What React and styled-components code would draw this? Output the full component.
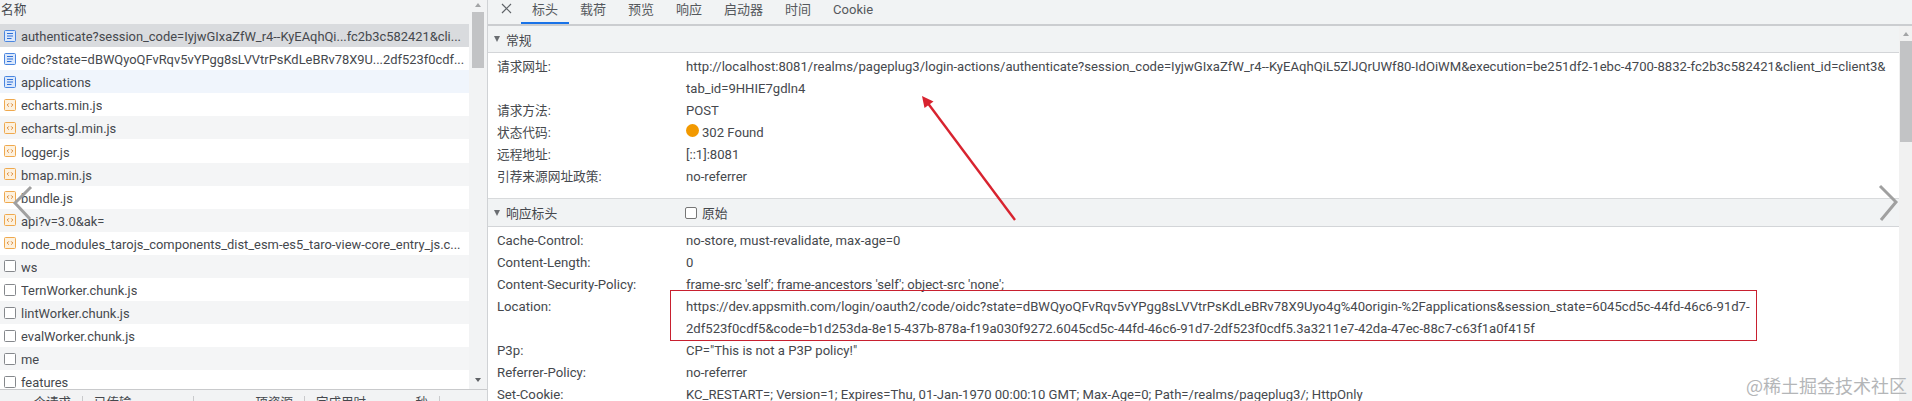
import React from "react";
import styled, { createGlobalStyle } from "styled-components";

const GlobalStyle = createGlobalStyle`
  html, body { margin: 0; padding: 0; background: #fff; }
  body { width: 1912px; height: 401px; overflow: hidden; font-family: "Roboto", "Noto Sans CJK SC", sans-serif; }
`;

const Page = styled.div`
  position: relative;
  display: flex;
  width: 1912px;
  height: 401px;
  overflow: hidden;
  color: #45484d;
`;

const ListPane = styled.div`
  flex: 0 0 487px;
  height: 401px;
  display: flex;
  flex-direction: column;
  border-right: 1px solid #d0d2d5;
  background: #f2f3f4;
`;

const ListHeader = styled.div`
  height: 24px;
  flex: none;
  padding-left: 1px;
  line-height: 19px;
  font-size: 12.7px;
  box-sizing: border-box;
`;

const ListBody = styled.div`
  display: flex;
  flex: none;
  height: 365px;
`;

const Rows = styled.div`
  width: 469px;
  flex: none;
  overflow: hidden;
  background: #fff;
`;

const Row = styled.div`
  height: 23.1px;
  display: flex;
  align-items: center;
  gap: 5px;
  padding-left: 4px;
  font-size: 12.9px;
  white-space: nowrap;
  overflow: hidden;
  background: ${(p) => (p.$selected ? "#d9dbde" : p.$hover ? "#f0f5fc" : p.$odd ? "#f4f5f6" : "#fff")};
`;

const RowName = styled.span`
  overflow: hidden;
  text-overflow: ellipsis;
  padding-top: 2px;
`;

const ListScrollbar = styled.div`
  position: relative;
  flex: 1;
`;

const DetailScrollbar = styled.div`
  position: relative;
  flex: 0 0 13px;
  background: #f1f1f1;
`;

const ScrollThumb = styled.div`
  position: absolute;
  right: ${(p) => p.$right}px;
  top: ${(p) => p.$top}px;
  width: ${(p) => p.$width}px;
  height: ${(p) => p.$height}px;
  background: #c2c3c5;
`;

const ScrollArrow = styled.div`
  position: absolute;
  right: ${(p) => p.$right}px;
  top: ${(p) => p.$top}px;
  width: 0;
  height: 0;
  border-left: 3.5px solid transparent;
  border-right: 3.5px solid transparent;
  ${(p) => (p.$up ? "border-bottom: 4px solid #a3a4a6;" : "border-top: 4px solid #5f6165;")}
`;

const StatusBar = styled.div`
  flex: 1;
  display: flex;
  align-items: flex-start;
  padding-top: 6px;
  border-top: 1px solid #c9cacc;
  overflow: hidden;
`;

const StatusItem = styled.div`
  display: flex;
  justify-content: ${(p) => p.$justify || "flex-start"};
  width: ${(p) => p.$width}px;
  height: 20px;
  padding: 0 11px;
  flex: none;
  box-sizing: border-box;
  border-right: 1px solid #c9cacc;
  font-size: 12.5px;
  line-height: 14px;
  white-space: nowrap;
`;

const DetailPane = styled.div`
  flex: 1;
  min-width: 0;
  display: flex;
  flex-direction: column;
  background: #fff;
`;

const TabBar = styled.div`
  height: 26px;
  flex: none;
  box-sizing: border-box;
  display: flex;
  align-items: flex-start;
  background: #f1f3f4;
  border-bottom: 2px solid #cbcdd0;
`;

const CloseButton = styled.div`
  width: 33px;
  height: 16px;
  padding-left: 4px;
  box-sizing: border-box;
  display: flex;
  align-items: center;
  justify-content: center;
  svg { display: block; }
`;

const Tab = styled.div`
  height: 24px;
  box-sizing: border-box;
  padding: 0 11px;
  line-height: 19px;
  font-size: 13px;
  color: #55585c;
  border-bottom: 2px solid ${(p) => (p.$active ? "#1a73e8" : "transparent")};
`;

const DetailBody = styled.div`
  flex: 1;
  min-height: 0;
  display: flex;
  overflow: hidden;
`;

const DetailContent = styled.div`
  position: relative;
  flex: 1;
  min-width: 0;
`;

const Section = styled.section`
  border-bottom: ${(p) => (p.$last ? "none" : "1px solid #d8dadc")};
`;

const SectionHeader = styled.div`
  height: ${(p) => p.$height}px;
  box-sizing: border-box;
  display: flex;
  align-items: center;
  background: #f1f3f4;
  border-bottom: 1px solid #d3d5d8;
  padding-left: 6px;
  font-size: 12.8px;
`;

const Caret = styled.span`
  width: 0;
  height: 0;
  border-left: 3.5px solid transparent;
  border-right: 3.5px solid transparent;
  border-top: 6px solid #6a6d71;
  margin-right: 6px;
`;

const SectionTitle = styled.span`
  width: 179px;
  flex: none;
`;

const RawToggle = styled.label`
  display: flex;
  align-items: center;
  gap: 5px;
`;

const CheckBox = styled.span`
  display: block;
  width: 12px;
  height: 12px;
  box-sizing: border-box;
  border: 1px solid #767676;
  border-radius: 2px;
  background: #fff;
`;

const KeyValues = styled.div`
  padding: 3px 0 ${(p) => p.$bottom || 0}px 9px;
`;

const KeyValue = styled.div`
  display: flex;
  line-height: 22px;
  font-size: 13.1px;
  white-space: nowrap;
`;

const Key = styled.div`
  width: 189px;
  flex: none;
  font-size: ${(p) => (p.$cjk ? "12.7px" : "13.2px")};
`;

const StatusDot = styled.span`
  display: inline-block;
  width: 13px;
  height: 13px;
  border-radius: 50%;
  background: #f29900;
  margin-right: 3px;
  vertical-align: 0;
`;

const Highlight = styled.div`
  position: absolute;
  left: 182px;
  top: 264px;
  width: 1087px;
  height: 51px;
  border: 1px solid #c8202f;
  box-sizing: border-box;
  pointer-events: none;
`;

const Overlay = styled.svg`
  position: absolute;
  left: 0;
  top: 0;
  width: 1912px;
  height: 401px;
  pointer-events: none;
`;

const Watermark = styled.div`
  position: absolute;
  right: 5px;
  bottom: 5px;
  font-size: 18px;
  line-height: 22px;
  color: #b4b6b8;
  font-family: "Noto Sans CJK SC", sans-serif;
`;

const DocIcon = () => (
  <svg width="12" height="12" viewBox="0 0 12 12" style={{ flex: "none" }}>
    <rect x="0.5" y="0.5" width="11" height="11" rx="1" fill="#dbe8fb" stroke="#4a86e0" />
    <path d="M3 3.5h6M3 6h6M3 8.5h4.5" stroke="#2f6fd6" strokeWidth="1.1" />
  </svg>
);

const ScriptIcon = () => (
  <svg width="12" height="12" viewBox="0 0 12 12" style={{ flex: "none" }}>
    <rect x="0.5" y="0.5" width="11" height="11" rx="1" fill="#fdf1de" stroke="#efa94e" />
    <path d="M4.8 4.4L3.2 6l1.6 1.6M7.2 4.4L8.8 6 7.2 7.6" fill="none" stroke="#d9822b" strokeWidth="1" />
  </svg>
);

const BlankIcon = () => (
  <svg width="12" height="12" viewBox="0 0 12 12" style={{ flex: "none" }}>
    <rect x="0.5" y="0.5" width="11" height="11" rx="1" fill="#fff" stroke="#85888c" />
  </svg>
);

const requests = [
  ["doc", "authenticate?session_code=IyjwGIxaZfW_r4--KyEAqhQi...fc2b3c582421&cli..."],
  ["doc", "oidc?state=dBWQyoQFvRqv5vYPgg8sLVVtrPsKdLeBRv78X9U...2df523f0cdf..."],
  ["doc", "applications"],
  ["js", "echarts.min.js"],
  ["js", "echarts-gl.min.js"],
  ["js", "logger.js"],
  ["js", "bmap.min.js"],
  ["js", "bundle.js"],
  ["js", "api?v=3.0&ak="],
  ["js", "node_modules_tarojs_components_dist_esm-es5_taro-view-core_entry_js.c..."],
  ["blank", "ws"],
  ["blank", "TernWorker.chunk.js"],
  ["blank", "lintWorker.chunk.js"],
  ["blank", "evalWorker.chunk.js"],
  ["blank", "me"],
  ["blank", "features"],
];

const icons = { doc: DocIcon, js: ScriptIcon, blank: BlankIcon };

const tabs = ["标头", "载荷", "预览", "响应", "启动器", "时间", "Cookie"];

const general = [
  ["请求网址:", [
    "http://localhost:8081/realms/pageplug3/login-actions/authenticate?session_code=IyjwGIxaZfW_r4--KyEAqhQiL5ZlJQrUWf80-IdOiWM&execution=be251df2-1ebc-4700-8832-fc2b3c582421&client_id=client3&",
    "tab_id=9HHIE7gdln4",
  ]],
  ["请求方法:", ["POST"]],
  ["状态代码:", [<><StatusDot />302 Found</>]],
  ["远程地址:", ["[::1]:8081"]],
  ["引荐来源网址政策:", ["no-referrer"]],
];

const response = [
  ["Cache-Control:", ["no-store, must-revalidate, max-age=0"]],
  ["Content-Length:", ["0"]],
  ["Content-Security-Policy:", ["frame-src 'self'; frame-ancestors 'self'; object-src 'none';"]],
  ["Location:", [
    "https://dev.appsmith.com/login/oauth2/code/oidc?state=dBWQyoQFvRqv5vYPgg8sLVVtrPsKdLeBRv78X9Uyo4g%40origin-%2Fapplications&session_state=6045cd5c-44fd-46c6-91d7-",
    "2df523f0cdf5&code=b1d253da-8e15-437b-878a-f19a030f9272.6045cd5c-44fd-46c6-91d7-2df523f0cdf5.3a3211e7-42da-47ec-88c7-c63f1a0f415f",
  ]],
  ["P3p:", ['CP="This is not a P3P policy!"']],
  ["Referrer-Policy:", ["no-referrer"]],
  ["Set-Cookie:", ["KC_RESTART=; Version=1; Expires=Thu, 01-Jan-1970 00:00:10 GMT; Max-Age=0; Path=/realms/pageplug3/; HttpOnly"]],
];

const Pairs = ({ items, bottom, cjk }) => (
  <KeyValues $bottom={bottom}>
    {items.map(([k, lines]) => (
      <KeyValue key={k}>
        <Key $cjk={cjk}>{k}</Key>
        <div>
          {lines.map((line, i) => (
            <div key={i}>{line}</div>
          ))}
        </div>
      </KeyValue>
    ))}
  </KeyValues>
);

export default function App() {
  return (
    <Page>
      <GlobalStyle />
      <ListPane>
        <ListHeader>名称</ListHeader>
        <ListBody>
          <Rows>
            {requests.map(([kind, name], i) => {
              const Icon = icons[kind];
              return (
                <Row key={name} $selected={i === 0} $hover={i === 2} $odd={i % 2 === 0}>
                  <Icon />
                  <RowName>{name}</RowName>
                </Row>
              );
            })}
          </Rows>
          <ListScrollbar>
            <ScrollArrow $up $right={6} $top={-21} />
            <ScrollThumb $right={3} $top={-12} $width={12} $height={56} />
            <ScrollArrow $right={6} $top={354} />
          </ListScrollbar>
        </ListBody>
        <StatusBar>
          <StatusItem $width={83} $justify="flex-end">个请求</StatusItem>
          <StatusItem $width={111}>已传输</StatusItem>
          <StatusItem $width={111} $justify="flex-end">项资源</StatusItem>
          <StatusItem $width={135} $justify="space-between">
            <span>完成用时</span>
            <span>秒</span>
          </StatusItem>
        </StatusBar>
      </ListPane>
      <DetailPane>
        <TabBar>
          <CloseButton>
            <svg width="11" height="11" viewBox="0 0 11 11">
              <path d="M1 1l9 9M10 1l-9 9" stroke="#5f6368" strokeWidth="1.2" />
            </svg>
          </CloseButton>
          {tabs.map((t, i) => (
            <Tab key={t} $active={i === 0}>{t}</Tab>
          ))}
        </TabBar>
        <DetailBody>
          <DetailContent>
            <Section>
              <SectionHeader $height={27}><Caret />常规</SectionHeader>
              <Pairs items={general} bottom={10} cjk />
            </Section>
            <Section $last>
              <SectionHeader $height={28}>
                <Caret />
                <SectionTitle>响应标头</SectionTitle>
                <RawToggle><CheckBox />原始</RawToggle>
              </SectionHeader>
              <Pairs items={response} />
            </Section>
            <Highlight />
          </DetailContent>
          <DetailScrollbar>
            <ScrollArrow $up $right={3} $top={6} />
            <ScrollThumb $right={0} $top={15} $width={12} $height={101} />
          </DetailScrollbar>
        </DetailBody>
      </DetailPane>
      <Overlay viewBox="0 0 1912 401">
        <path d="M1015 220L927 102" stroke="#d8232f" strokeWidth="2.4" fill="none" />
        <path d="M922 96l11.5 5.5-9 6.5z" fill="#d8232f" />
        <path d="M31 187L15 203L30 219" stroke="#a0a0a0" strokeWidth="3" fill="none" />
        <path d="M1880 186L1896 202L1881 220" stroke="#a0a0a0" strokeWidth="3" fill="none" />
      </Overlay>
      <Watermark>@稀土掘金技术社区</Watermark>
    </Page>
  );
}
